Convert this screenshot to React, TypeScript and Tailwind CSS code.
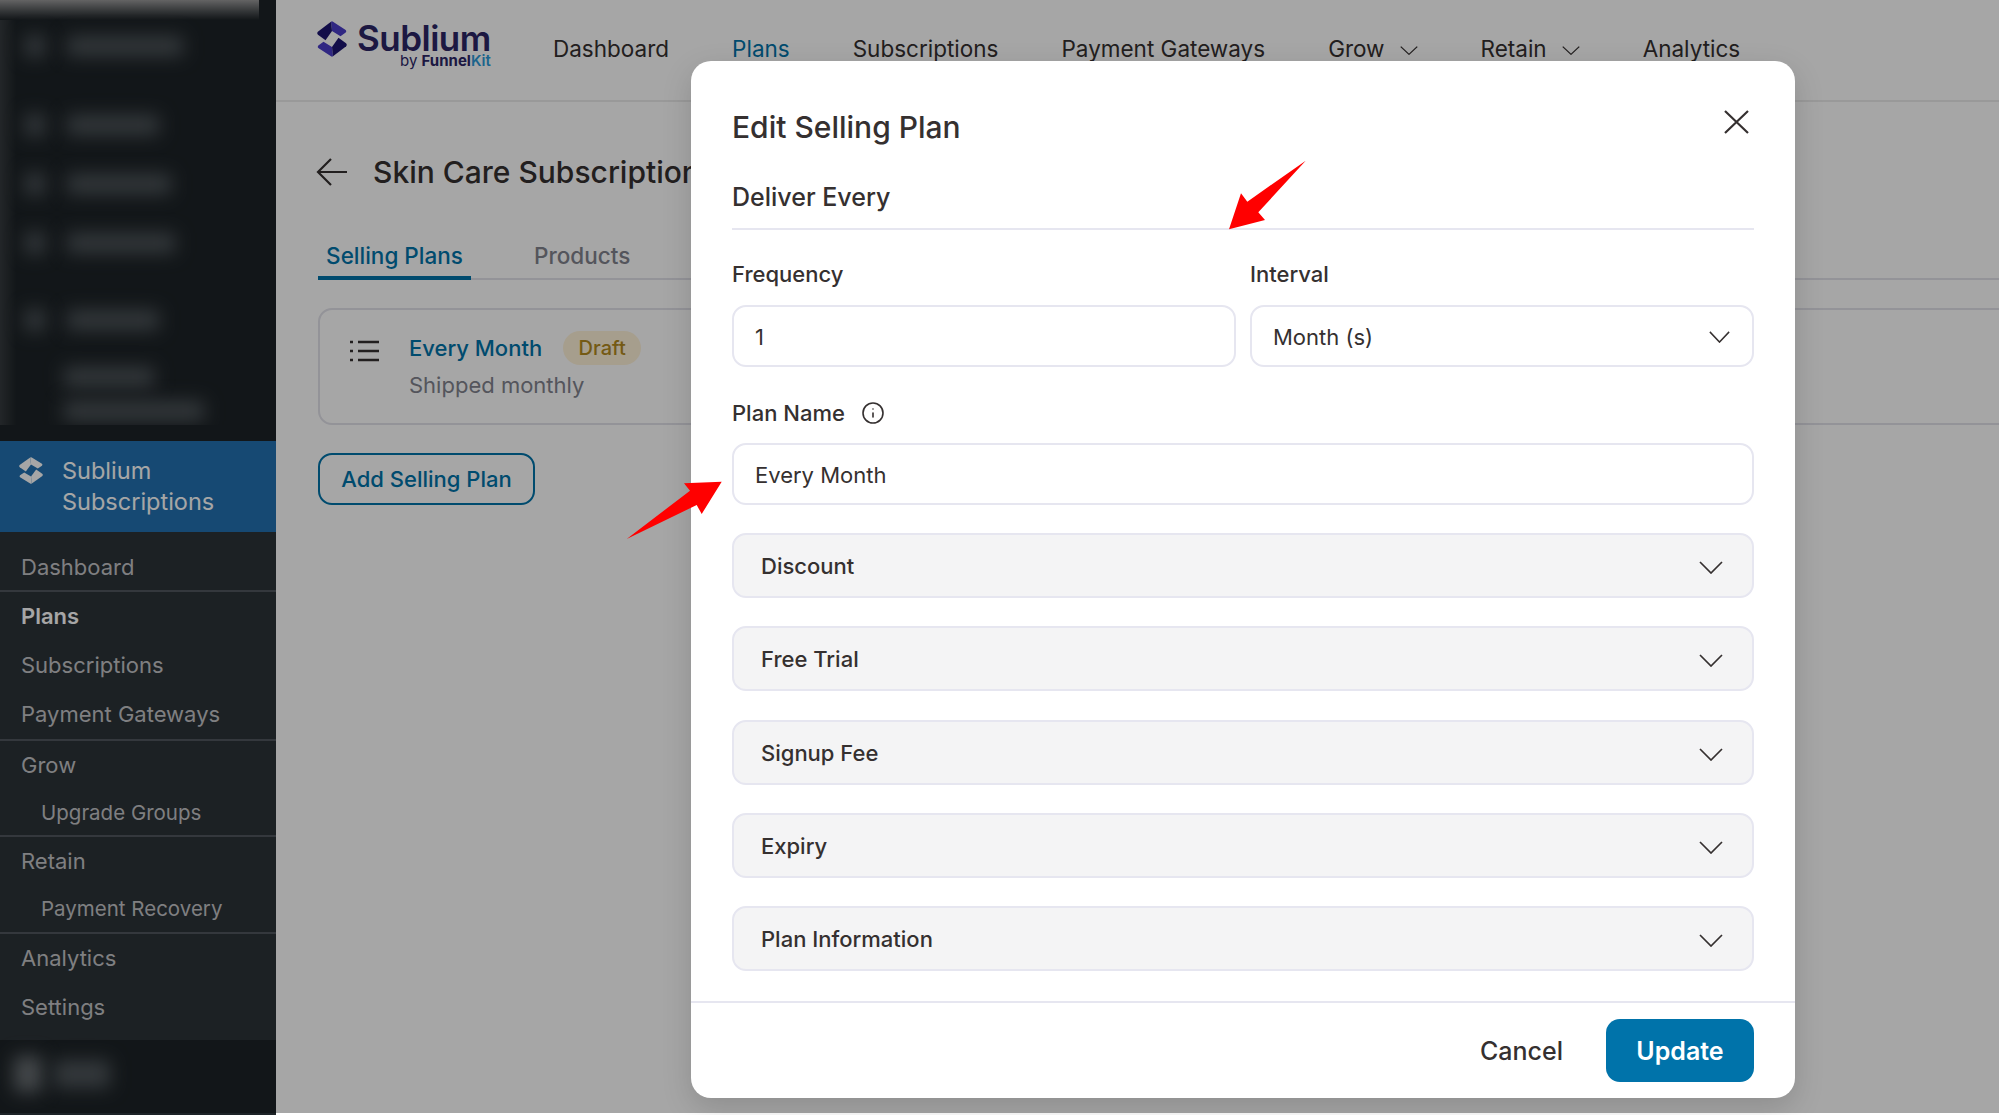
import { Info } from 'lucide-react';

const navItems = [
    { label: 'Dashboard' },
    { label: 'Plans', active: true },
    { label: 'Subscriptions' },
    { label: 'Payment Gateways' },
    { label: 'Grow', menu: true },
    { label: 'Retain', menu: true },
    { label: 'Analytics' },
];

const blurredRows = [
    { mt: 'mt-[34px]', bar: 'w-[116px]' },
    { mt: 'mt-[57px]', bar: 'w-[92px]' },
    { mt: 'mt-[37px]', bar: 'w-[104px]' },
    { mt: 'mt-[37px]', bar: 'w-[108px]' },
    { mt: 'mt-[55px]', bar: 'w-[92px]' },
];

const sections = ['Discount', 'Free Trial', 'Signup Fee', 'Expiry', 'Plan Information'];

const Chevron = ({ className }: { className: string }) => (
    <svg viewBox="0 0 24 13" fill="none" stroke="currentColor" strokeWidth="1.7" preserveAspectRatio="none" className={className}>
        <polyline points="1,1 12,12 23,1" />
    </svg>
);

const LogoMark = ({ className, light, dark }: { className: string; light: string; dark: string }) => {
    const lobe = (
        <>
            <path d="M14 0.5 Q15 0 16 0.5 L28.7 6.7 Q30 7.5 28.7 8.7 L23.5 11.5 L15 7.5 Z" fill={light} />
            <path d="M14 0.5 L15 7.5 L8.5 14.5 L1 10.3 Q-0.4 9.3 0.8 8 Z" fill={dark} />
        </>
    );
    return (
        <svg viewBox="0 0 30 27" preserveAspectRatio="none" className={className}>
            {lobe}
            <g transform="rotate(180 15 13.5)">{lobe}</g>
        </svg>
    );
};

const SideItem = ({ label, sub, bold }: { label: string; sub?: boolean; bold?: boolean }) => (
    <div
        className={`flex items-center ${sub ? 'h-[46px] pl-[41px] text-[20.5px]' : 'h-[49px] pl-[21px] text-[22px]'} ${bold ? 'font-semibold text-white' : 'text-[#c3c4c7]'}`}
    >
        {label}
    </div>
);

const Sidebar = () => (
    <aside className="flex h-full w-[276px] shrink-0 flex-col bg-[#1d2327]">
        {/* blurred out admin menu */}
        <div className="h-[425px] w-[259px] overflow-hidden bg-[linear-gradient(90deg,#363b3f_0,#1d2327_16px)]">
            <div className="h-[20px] bg-gradient-to-b from-[#9a9a9a] to-[#1d2327]" />
            <div className="-mt-[20px] pt-px">
                {blurredRows.map((row, i) => (
                    <div key={i} className={`flex items-center gap-[22px] pl-[25px] ${row.mt}`}>
                        <div className="h-[22px] w-[20px] bg-[#50575c] blur-[9px]" />
                        <div className={`h-[20px] bg-[#50575c] blur-[9px] ${row.bar}`} />
                    </div>
                ))}
                <div className="mt-[36px] flex flex-col gap-[14px] pl-[64px]">
                    <div className="h-[20px] w-[90px] bg-[#50575c] blur-[9px]" />
                    <div className="h-[20px] w-[140px] bg-[#50575c] blur-[9px]" />
                </div>
            </div>
        </div>
        <div className="mt-[16px] flex h-[91px] items-start gap-[19px] bg-[#2271b1] pl-[19px] pt-[14px] text-white">
            <LogoMark className="mt-[2px] h-[27px] w-[24px] shrink-0" light="#ffffff" dark="#ffffff" />
            <div className="text-[23.5px] leading-[31px]">
                Sublium
                <br />
                Subscriptions
            </div>
        </div>
        <div className="flex h-[508px] flex-col bg-[#2c3338]">
            <div className="h-[60px] border-b-2 border-[#50575e] pt-[11px]">
                <SideItem label="Dashboard" />
            </div>
            <div className="border-b-2 border-[#50575e]">
                <SideItem label="Plans" bold />
                <SideItem label="Subscriptions" />
                <SideItem label="Payment Gateways" />
            </div>
            <div className="h-[96px] border-b-2 border-[#50575e]">
                <SideItem label="Grow" />
                <SideItem label="Upgrade Groups" sub />
            </div>
            <div className="border-b-2 border-[#50575e]">
                <SideItem label="Retain" />
                <SideItem label="Payment Recovery" sub />
            </div>
            <SideItem label="Analytics" />
            <SideItem label="Settings" />
        </div>
        <div className="flex flex-1 items-center gap-[12px] pb-[8px] pl-[14px]">
            <div className="h-[36px] w-[28px] bg-[#6a7074] blur-[9px]" />
            <div className="h-[28px] w-[56px] bg-[#50575c] blur-[9px]" />
        </div>
    </aside>
);

const Header = () => (
    <header className="flex h-[102px] shrink-0 items-start border-b-2 border-[#ececec] bg-white pl-[41px] pt-[30px]">
        <div className="flex w-[178px] shrink-0 gap-[10px]">
            <LogoMark className="-mt-[9px] h-[36px] w-[30px] shrink-0" light="#4a3cc8" dark="#1c1470" />
            <div className="-mt-[7px] flex flex-col items-end">
                <div className="text-[35px] font-semibold leading-[30px] tracking-[-0.5px] text-[#2b2566]">Sublium</div>
                <div className="text-[15px] leading-[15px] text-[#2b2566]">
                    by <span className="font-bold">Funnel</span>
                    <span className="font-semibold text-[#2c9ad8]">Kit</span>
                </div>
            </div>
        </div>
        <nav className="ml-[58px] flex h-[38px] items-center gap-[63px] text-[22.5px] text-[#353030]">
            {navItems.map((item) => (
                <div key={item.label} className={`flex items-center gap-[15px] whitespace-nowrap ${item.active ? 'text-[#0073aa]' : ''}`}>
                    {item.label}
                    {item.menu && <Chevron className="mt-[2px] h-[9px] w-[18px]" />}
                </div>
            ))}
        </nav>
    </header>
);

const PlanPage = () => (
    <main className="flex min-w-0 flex-1 flex-col bg-white">
        <Header />
        <div className="flex flex-1 flex-col overflow-hidden pl-[42px]">
            <div className="mt-[48px] flex h-[44px] items-center">
                <svg viewBox="0 0 32 28" fill="none" stroke="#353030" strokeWidth="2.2" className="-ml-[2px] h-[28px] w-[32px]">
                    <path d="M31 14H2M15 1 2 14l13 13" />
                </svg>
                <h1 className="ml-[25px] whitespace-nowrap text-[30px] font-medium text-[#353030]">Skin Care Subscriptions</h1>
            </div>
            <div className="mt-[40px] flex h-[46px] border-b-2 border-[#e2e2ea] text-[22.5px]">
                <div className="-mb-[2px] flex h-[46px] w-[153px] items-center justify-center border-b-[4px] border-[#0073aa] pt-[2px] font-medium text-[#0073aa]">
                    Selling Plans
                </div>
                <div className="ml-[63px] flex h-[44px] items-center font-medium text-[#82838e]">Products</div>
            </div>
            <div className="mt-[28px] flex h-[117px] w-[2000px] items-start rounded-[14px] border-2 border-[#e2e2ea] pl-[29px] pt-[21px]">
                <svg viewBox="0 0 30 22" fill="none" stroke="#353030" strokeWidth="2.6" className="mt-[9px] h-[22px] w-[30px]">
                    <path d="M9 2h21M9 11h21M9 20h21" />
                    <path d="M1 2h3M1 11h3M1 20h3" />
                </svg>
                <div className="ml-[30px]">
                    <div className="flex h-[34px] items-center">
                        <span className="text-[22px] font-medium text-[#0073aa]">Every Month</span>
                        <span className="ml-[21px] flex h-[34px] w-[78px] items-center justify-center rounded-full bg-[#fff3d9] text-[20px] font-medium text-[#b38a20]">
                            Draft
                        </span>
                    </div>
                    <div className="mt-[3px] text-[22px] leading-[34px] text-[#82838e]">Shipped monthly</div>
                </div>
            </div>
            <button className="mt-[28px] flex h-[52px] w-[217px] items-center justify-center rounded-[14px] border-2 border-[#0073aa] text-[22px] font-medium text-[#0073aa]">
                Add Selling Plan
            </button>
        </div>
    </main>
);

const TextField = ({ value, className }: { value: string; className?: string }) => (
    <div className={`flex h-[62px] items-center rounded-[14px] border-2 border-[#e6e6f0] pl-[21px] pt-[2px] text-[22px] text-[#353030] ${className ?? ''}`}>
        {value}
    </div>
);

const EditPlanModal = () => (
    <div className="ml-[691px] flex h-[1037px] w-[1104px] flex-col rounded-[20px] bg-white shadow-[0_10px_30px_rgba(0,0,0,0.15)]">
        <div className="px-[41px] pt-[46px]">
            <div className="flex items-start justify-between">
                <h2 className="text-[30px] font-medium leading-[40px] text-[#353030]">Edit Selling Plan</h2>
                <svg viewBox="0 0 25 24" fill="none" stroke="#353030" strokeWidth="2.2" className="mr-[5px] mt-[3px] h-[24px] w-[25px]">
                    <path d="M1 1l23 22M24 1 1 23" />
                </svg>
            </div>
            <div className="mt-[34px] border-b-2 border-[#e6e6f0] pb-[15px] text-[25px] font-medium leading-[32px] text-[#353030]">
                Deliver Every
            </div>
            <div className="mt-[30px] flex gap-[14px]">
                <div className="w-[504px]">
                    <div className="text-[22px] font-medium leading-[28px] text-[#353030]">Frequency</div>
                    <TextField value="1" className="mt-[17px]" />
                </div>
                <div className="flex-1">
                    <div className="text-[22px] font-medium leading-[28px] text-[#353030]">Interval</div>
                    <div className="mt-[17px] flex h-[62px] items-center justify-between rounded-[14px] border-2 border-[#e6e6f0] pl-[21px] pr-[22px] pt-[2px] text-[22px] text-[#353030]">
                        Month (s)
                        <Chevron className="h-[12px] w-[21px] text-[#353030]" />
                    </div>
                </div>
            </div>
            <div className="mt-[32px] flex items-center gap-[16px] text-[22px] font-medium leading-[28px] text-[#353030]">
                Plan Name
                <Info className="h-[24px] w-[24px]" strokeWidth={1.6} />
            </div>
            <TextField value="Every Month" className="mt-[16px]" />
            <div className="mt-[28px] flex flex-col gap-[28.25px]">
                {sections.map((section) => (
                    <div
                        key={section}
                        className="flex h-[65px] items-center justify-between rounded-[14px] border-2 border-[#e6e6f0] bg-[#f4f4f5] pl-[27px] pr-[29px] pt-[2px] text-[22px] font-medium text-[#353030]"
                    >
                        {section}
                        <Chevron className="mt-[2px] h-[13px] w-[24px]" />
                    </div>
                ))}
            </div>
        </div>
        <div className="mt-[30px] flex items-center justify-end gap-[43px] border-t-2 border-[#e6e6f0] px-[41px] pt-[16px]">
            <button className="pt-[2px] text-[25px] font-medium text-[#353030]">Cancel</button>
            <button className="h-[63px] w-[148px] rounded-[14px] bg-[#0073aa] pt-[2px] text-[25px] font-semibold text-white">Update</button>
        </div>
    </div>
);

const Arrows = () => (
    <svg viewBox="0 0 1999 1115" className="pointer-events-none absolute inset-0 h-[1115px] w-[1999px]">
        <polygon fill="#ff0000" points="1305.7,160.7 1247.3,201.7 1241,193.3 1229,229.3 1265,220 1258.3,212.3" />
        <polygon fill="#ff0000" points="626.7,539 690,490.7 684,483.3 721.7,481.7 701.7,514 696.7,505" />
    </svg>
);

export default function App() {
    return (
        <div className="relative flex h-[1115px] w-full overflow-hidden bg-white [font-family:Inter,sans-serif]">
            <Sidebar />
            <PlanPage />
            <div className="absolute inset-x-0 bottom-[2px] top-0 bg-black/35 pt-[61px]">
                <EditPlanModal />
            </div>
            <Arrows />
        </div>
    );
}
